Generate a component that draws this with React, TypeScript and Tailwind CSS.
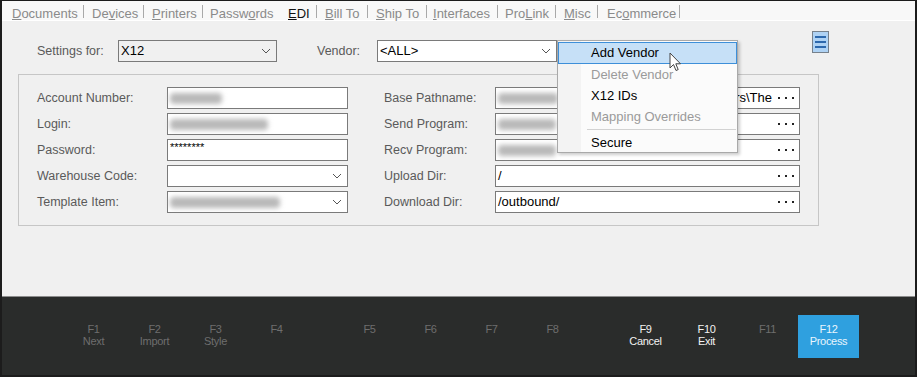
import React from "react";

const tabs = [
  { label: "Documents", u: 0, w: "w-[71px]", after: "w-[8px]", sep: true },
  { label: "Devices", u: 2, w: "w-[51px]", after: "w-[8px]", sep: true },
  { label: "Printers", u: 0, w: "w-[50px]", after: "w-[7px]", sep: true },
  { label: "Passwords", u: 5, w: "w-[70px]", after: "w-[7px]", sep: false },
  { label: "EDI", u: 0, w: "w-[28px]", after: "w-[8px]", sep: true, active: true },
  { label: "Bill To", u: 0, w: "w-[42px]", after: "w-[8px]", sep: true },
  { label: "Ship To", u: 0, w: "w-[50px]", after: "w-[6px]", sep: true },
  { label: "Interfaces", u: 0, w: "w-[64px]", after: "w-[7px]", sep: true },
  { label: "ProLink", u: 3, w: "w-[50px]", after: "w-[8px]", sep: true },
  { label: "Misc", u: 0, w: "w-[33px]", after: "w-[9px]", sep: true },
  { label: "Ecommerce", u: 2, w: "w-[72px]", after: "w-[8px]", sep: true },
];

const fkeys = [
  [
    { k: "F1", sub: "Next" },
    { k: "F2", sub: "Import" },
    { k: "F3", sub: "Style" },
    { k: "F4", sub: "" },
  ],
  [
    { k: "F5", sub: "" },
    { k: "F6", sub: "" },
    { k: "F7", sub: "" },
    { k: "F8", sub: "" },
  ],
  [
    { k: "F9", sub: "Cancel", on: true },
    { k: "F10", sub: "Exit", on: true },
    { k: "F11", sub: "" },
    { k: "F12", sub: "Process", primary: true },
  ],
];

function Chevron() {
  return (
    <svg width="10" height="6" viewBox="0 0 10 6" className="shrink-0 ml-auto">
      <polyline points="1,1 5,5 9,1" fill="none" stroke="#555" strokeWidth="1" />
    </svg>
  );
}

function Dots() {
  return (
    <div className="flex items-center gap-[5px] shrink-0">
      <div className="w-[2px] h-[2px] bg-[#222]" />
      <div className="w-[2px] h-[2px] bg-[#222]" />
      <div className="w-[2px] h-[2px] bg-[#222]" />
    </div>
  );
}

function Blur({ w }: { w: string }) {
  return <div className={`${w} h-[11px] bg-[#b9b9b9] blur-[2.5px] rounded-sm shrink-0`} />;
}

function Field({ children, grey }: { children?: React.ReactNode; grey?: boolean }) {
  return (
    <div
      className={
        "h-[22px] border border-[#7a7a7a] flex items-center pl-[2px] pr-[5px] text-[13px] text-black " +
        (grey ? "bg-[#f0f0f0]" : "bg-white")
      }
    >
      {children}
    </div>
  );
}

function Label({ text, w }: { text: string; w: string }) {
  return <div className={`${w} shrink-0 text-[12.5px] text-[#5a5a5a]`}>{text}</div>;
}

export default function App() {
  return (
    <div className="relative w-[918px] h-[377px] bg-white font-['Liberation_Sans',Arial,sans-serif] overflow-hidden">
      <div className="w-[917px] h-[377px] flex flex-col border-t border-l-2 border-r-2 border-b-2 border-[#1c1c1c]">
        {/* tab strip */}
        <div className="h-[20px] shrink-0 bg-[#f8f8f8] border-b border-white flex items-center pl-[10px] text-[13px]">
          {tabs.map((t) => (
            <div key={t.label} className="flex items-center">
              <div className={`${t.w} ${t.active ? "text-[#111]" : "text-[#8a8a8a]"} leading-[15px] pt-[5px] whitespace-nowrap`}>
                {t.label.slice(0, t.u)}
                <span className="underline">{t.label[t.u]}</span>
                {t.label.slice(t.u + 1)}
              </div>
              <div className={`w-px h-[13px] mt-[2px] ${t.sep ? "bg-[#a8a8a8]" : "bg-transparent"}`} />
              <div className={t.after} />
            </div>
          ))}
        </div>

        {/* main */}
        <div className="flex-1 bg-[#f0f0f0] pt-[19px]">
          <div className="flex items-center h-[22px] pl-[35px]">
            <Label text="Settings for:" w="w-[81px]" />
            <div className="w-[159px]">
              <Field grey>
                <span>X12</span>
                <Chevron />
              </Field>
            </div>
            <div className="w-[40px]" />
            <Label text="Vendor:" w="w-[60px]" />
            <div className="w-[180px]">
              <Field>
                <span>&lt;ALL&gt;</span>
                <Chevron />
              </Field>
            </div>
            <div className="ml-[255px] self-start -mt-[9px] w-[17px] h-[22px] bg-[#aed2f4] border border-[#76818c] flex flex-col items-center justify-center gap-[3px]">
              <div className="w-[11px] h-[2px] bg-[#2c68ad]" />
              <div className="w-[11px] h-[2px] bg-[#2c68ad]" />
              <div className="w-[11px] h-[2px] bg-[#2c68ad]" />
            </div>
          </div>

          <div className="ml-[16px] mt-[12px] w-[801px] h-[152px] border border-[#c6c6c6] pt-[12px] pl-[18px] flex flex-col gap-[4px]">
            <div className="flex items-center">
              <Label text="Account Number:" w="w-[130px]" />
              <div className="w-[181px]"><Field><Blur w="w-[52px]" /></Field></div>
              <div className="w-[36px]" />
              <Label text="Base Pathname:" w="w-[111px]" />
              <div className="w-[305px]">
                <Field>
                  <Blur w="w-[60px]" />
                  <span className="flex-1" />
                  <span className="mr-[6px]">rs\The</span>
                  <Dots />
                </Field>
              </div>
            </div>
            <div className="flex items-center">
              <Label text="Login:" w="w-[130px]" />
              <div className="w-[181px]"><Field><Blur w="w-[98px]" /></Field></div>
              <div className="w-[36px]" />
              <Label text="Send Program:" w="w-[111px]" />
              <div className="w-[305px]"><Field><Blur w="w-[58px]" /><span className="flex-1" /><Dots /></Field></div>
            </div>
            <div className="flex items-center">
              <Label text="Password:" w="w-[130px]" />
              <div className="w-[181px]"><Field><span className="text-[11px] leading-[11px] -mt-[6px]">********</span></Field></div>
              <div className="w-[36px]" />
              <Label text="Recv Program:" w="w-[111px]" />
              <div className="w-[305px]"><Field><Blur w="w-[58px]" /><span className="flex-1" /><Dots /></Field></div>
            </div>
            <div className="flex items-center">
              <Label text="Warehouse Code:" w="w-[130px]" />
              <div className="w-[181px]"><Field><Chevron /></Field></div>
              <div className="w-[36px]" />
              <Label text="Upload Dir:" w="w-[111px]" />
              <div className="w-[305px]"><Field><span className="flex-1">/</span><Dots /></Field></div>
            </div>
            <div className="flex items-center">
              <Label text="Template Item:" w="w-[130px]" />
              <div className="w-[181px]"><Field><Blur w="w-[110px]" /><Chevron /></Field></div>
              <div className="w-[36px]" />
              <Label text="Download Dir:" w="w-[111px]" />
              <div className="w-[305px]"><Field><span className="flex-1">/outbound/</span><Dots /></Field></div>
            </div>
          </div>
        </div>

        {/* function key bar */}
        <div className="h-[79px] shrink-0 border-t border-[#8c8c8c] bg-[#2a2c2b] flex pl-[61px] pt-[18px] gap-[32px]">
          {fkeys.map((group, gi) => (
            <div key={gi} className="flex">
              {group.map((f) => (
                <div
                  key={f.k}
                  className={
                    "w-[61px] h-[43px] flex flex-col items-center pt-[8px] text-[11px] leading-[12px] tracking-[-0.3px] " +
                    (f.primary
                      ? "bg-[#2fa0df] text-[#eaf5fd]"
                      : f.on
                      ? "text-[#f2f2f2]"
                      : "text-[#6e6e6e]")
                  }
                >
                  <span>{f.k}</span>
                  <span>{f.sub || "\u00a0"}</span>
                </div>
              ))}
            </div>
          ))}
        </div>
      </div>

      {/* context menu */}
      <div className="absolute left-[557px] top-[40px] w-[181px] h-[113px] bg-[#fbfbfb] border border-[#a9a9a9] shadow-[2px_2px_3px_rgba(0,0,0,0.2)] pt-[1px] text-[13px]">
        <div className="absolute left-0 top-0 w-[23px] h-full bg-[#f3f3f3]" />
        <div className="relative h-[22px] bg-[#c6e0f7] border border-[#3d8fd9] flex items-center pl-[32px] text-black">
          Add Vendor
        </div>
        <div className="relative h-[21px] flex items-center pl-[33px] text-[#9a9a9a]">Delete Vendor</div>
        <div className="relative h-[21px] flex items-center pl-[33px] text-black">X12 IDs</div>
        <div className="relative h-[21px] flex items-center pl-[33px] text-[#9a9a9a]">Mapping Overrides</div>
        <div className="relative h-[5px] flex items-center pl-[29px] pr-[1px]">
          <div className="w-full h-px bg-[#d2d2d2]" />
        </div>
        <div className="relative h-[21px] flex items-center pl-[33px] text-black">Secure</div>
      </div>

      {/* mouse pointer */}
      <svg className="absolute left-[669px] top-[52px]" width="13" height="20" viewBox="0 0 13 20">
        <path
          d="M1 1 L1 16 L4.5 12.5 L7 18.5 L9.2 17.6 L6.8 11.8 L11.5 11.8 Z"
          fill="#fff"
          stroke="#444"
          strokeWidth="1"
          strokeLinejoin="round"
        />
      </svg>
    </div>
  );
}
